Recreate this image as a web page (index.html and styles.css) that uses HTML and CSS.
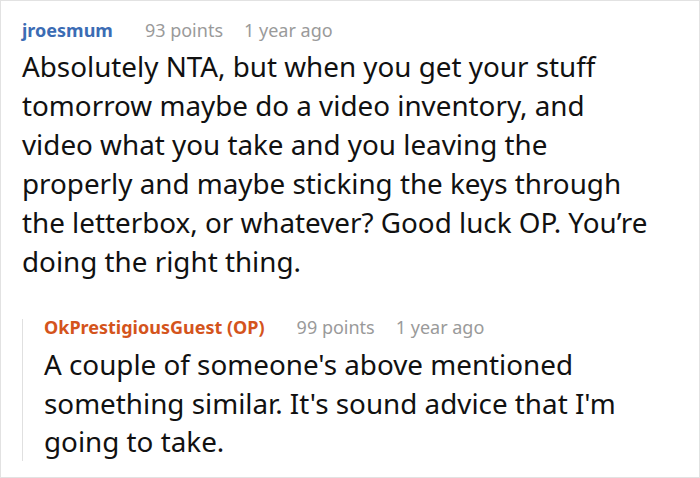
FILE: index.html
```html
<!DOCTYPE html>
<html>
<head>
<meta charset="utf-8">
<link rel="stylesheet" href="styles.css">
</head>
<body>
<div class="frame">
  <div class="comment">
    <div class="meta">
      <span class="author author-blue">jroesmum</span>
      <span class="info">93 points</span>
      <span class="info">1 year ago</span>
    </div>
    <p class="text">Absolutely NTA, but when you get your stuff tomorrow maybe do a video inventory, and video what you take and you leaving the properly and maybe sticking the keys through the letterbox, or whatever? Good luck OP. You’re doing the right thing.</p>
    <div class="reply">
      <div class="meta meta-reply">
        <span class="author author-orange">OkPrestigiousGuest (OP)</span>
        <span class="info">99 points</span>
        <span class="info">1 year ago</span>
      </div>
      <p class="text text-reply">A couple of someone's above mentioned something similar. It's sound advice that I'm going to take.</p>
    </div>
  </div>
</div>
</body>
</html>
```

FILE: styles.css
```css
html, body {
  margin: 0;
  padding: 0;
  background: #fff;
}
.frame {
  width: 700px;
  height: 478px;
  box-sizing: border-box;
  border: 1px solid #e2e2e2;
  overflow: hidden;
  font-family: "Noto Sans", "Open Sans", sans-serif;
}
.comment {
  padding: 16px 44px 0 21px;
}
.meta {
  display: flex;
  gap: 21px;
  font-size: 18px;
  line-height: 26px;
  white-space: nowrap;
}
.meta-reply {
  line-height: 16px;
}
.author {
  font-weight: bold;
  margin-right: 11px;
}
.author-blue { color: #3b6cb4; }
.author-orange { color: #d4541c; }
.info { color: #9a9a9a; }
.text {
  margin: 4px 0 0;
  font-size: 27.8px;
  line-height: 39px;
  color: #111;
}
.text-reply {
  margin-top: 10px;
  line-height: 38.5px;
}
.reply {
  margin-top: 38px;
  border-left: 1px solid #e0e0e0;
  padding-left: 21px;
}
```
